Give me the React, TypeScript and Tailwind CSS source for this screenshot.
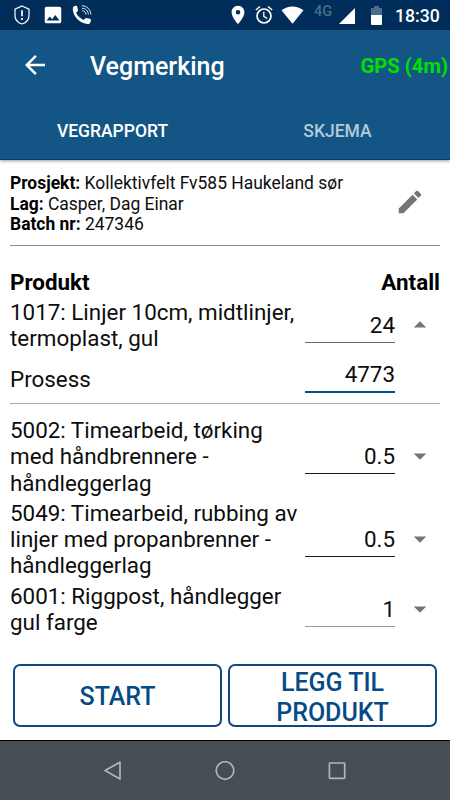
import React from 'react';
import clsx from 'clsx';
import { MdArrowBack, MdArrowDropDown, MdArrowDropUp, MdEdit, MdImage, MdLocationOn } from 'react-icons/md';

type Product = {
  lines: string[];
  amount: string;
  open?: boolean;
  underline: string;
};

const products: Product[] = [
  {
    lines: ['5002: Timearbeid, tørking', 'med håndbrennere -', 'håndleggerlag'],
    amount: '0.5',
    underline: 'bg-[#1c1c1c]',
  },
  {
    lines: ['5049: Timearbeid, rubbing av', 'linjer med propanbrenner -', 'håndleggerlag'],
    amount: '0.5',
    underline: 'bg-[#1c1c1c]',
  },
  {
    lines: ['6001: Riggpost, håndlegger', 'gul farge'],
    amount: '1',
    underline: 'bg-[#999999]',
  },
];

const StatusBar: React.FC = () => (
  <div className="h-[30px] bg-[#002d5a] flex items-center text-white shrink-0">
    {/* Shield */}
    <svg className="ml-[14px] w-4 h-5" viewBox="0 0 16 20" fill="none" stroke="currentColor">
      <path d="M8 1 L15 4.2 V10.5 C15 14.5 12 17.8 8 19 C4 17.8 1 14.5 1 10.5 V4.2 Z" strokeWidth="1.2" />
      <path d="M8 5.2 V11.2 M8 13 V15" strokeWidth="1.7" />
    </svg>
    <MdImage className="ml-[12px] w-[22px] h-[22px]" />
    {/* Call with sound waves */}
    <svg className="ml-[8px] w-[20px] h-[20px]" viewBox="0 0 20 20" fill="none">
      <path
        d="M1.2 2.2 C1.6 1.3 3.4 .7 4.4 .8 C5.2 .9 5.8 4.2 6 5.2 C6.1 6 4.4 7.2 4.1 7.8 C5.5 11 8.2 13.5 11.6 14.9 C12.3 14.6 13.3 12.8 14.1 12.9 L18 13.8 C19.3 14.2 18.9 15.6 18.6 16.7 C18.1 18.4 17.2 19.3 15.6 19.1 C8.2 18.3 1.7 12 .9 5.2 C.7 4 .8 3 1.2 2.2 Z"
        fill="currentColor"
      />
      <path
        d="M9.8 .9 C14.7 .6 18.7 4.4 18.8 9.5 M10 3.3 C13.4 3.2 16.4 6 16.4 9.5 M10.2 5.7 C12.2 5.7 13.9 7.3 14 9.5"
        stroke="currentColor"
        strokeWidth="0.9"
      />
    </svg>
    <div className="flex-1" />
    <MdLocationOn className="w-[22px] h-[22px]" />
    {/* Alarm */}
    <svg className="ml-[6px] w-[18px] h-[20px]" viewBox="0 0 18 20" fill="none" stroke="currentColor">
      <circle cx="9" cy="11" r="7" strokeWidth="1.7" />
      <path d="M.8 5 L5 1.5 M17.2 5 L13 1.5" strokeWidth="1.5" />
      <path d="M8.8 6.8 V11.3 L12.2 13.5" strokeWidth="1.3" />
    </svg>
    <svg className="ml-[8px] w-[23px] h-[18px]" viewBox="0 0 23 18">
      <path d="M.5 4.2 C7 -.9 16 -.9 22.5 4.2 L11.5 17.8 Z" fill="currentColor" />
    </svg>
    <span className="ml-[10px] w-[19px] mb-[7px] text-[14.5px] leading-4 font-medium text-[#4b6c8c]">4G</span>
    <svg className="ml-[6px] mt-[2px] w-4 h-4" viewBox="0 0 16 16">
      <path d="M0 16 L16 0 V16 Z" fill="currentColor" />
    </svg>
    <svg className="ml-[16px] w-[11px] h-[19px]" viewBox="0 0 11 19">
      <path d="M3 0 H8 V2 H11 V9 H0 V2 H3 Z" fill="#4b6c8c" />
      <path d="M0 9 H11 V18 Q11 19 10 19 H1 Q0 19 0 18 Z" fill="currentColor" />
    </svg>
    <span className="ml-[13px] mr-[10px] w-[45px] pt-[2px] text-[17.6px] font-medium">18:30</span>
  </div>
);

const AppHeader: React.FC = () => (
  <header className="h-[130px] bg-[#135685] text-white shrink-0 flex flex-col border-b border-[#003b79] shadow-[0_1px_3px_rgba(0,0,0,0.4)]">
    <div className="h-[71px] flex items-center">
      <MdArrowBack className="ml-[20px] -mt-[2px] w-[30px] h-[30px]" />
      <h1 className="ml-[40px] pt-[2px] text-[25px] leading-8 font-medium">Vegmerking</h1>
      <span className="ml-auto mr-[2px] pt-[2px] text-[20.2px] font-bold text-[#00e000]">GPS (4m)</span>
    </div>
    <nav className="flex-1 flex text-[17.5px] font-medium text-center">
      <span className="w-[225px] pt-[17px]">VEGRAPPORT</span>
      <span className="w-[225px] pt-[17px] text-[#b4cad9]">SKJEMA</span>
    </nav>
  </header>
);

const Amount: React.FC<{ value: string; underline: string }> = ({ value, underline }) => (
  <div className="w-[90px] h-[35px] flex flex-col text-right shrink-0">
    <span className="flex-1 pt-[4px]">{value}</span>
    <div className={clsx('h-px', underline)} />
  </div>
);

const ProductRow: React.FC<Product> = ({ lines, amount, open, underline }) => {
  const Arrow = open ? MdArrowDropUp : MdArrowDropDown;
  return (
    <div className="flex items-center">
      <div className="w-[295px] whitespace-nowrap">
        {lines.map((line) => (
          <div key={line}>{line}</div>
        ))}
      </div>
      <Amount value={amount} underline={underline} />
      <Arrow className="ml-[10px] w-[30px] h-[30px] text-[#757575]" />
    </div>
  );
};

const ActionButton: React.FC<{ children: React.ReactNode }> = ({ children }) => (
  <button className="w-[209px] h-[63px] pt-[2px] rounded-[7px] border-2 border-[#13477f] text-[#064a86] text-[25px] leading-[29.5px] font-medium">
    {children}
  </button>
);

const App: React.FC = () => (
  <div className="w-[450px] h-[800px] overflow-hidden bg-white text-[#0d0d0d] flex flex-col font-[Roboto,sans-serif]">
    <StatusBar />
    <AppHeader />

    <main className="h-[580px] px-[10px] flex flex-col shrink-0">
      {/* Project info */}
      <section className="h-[86px] pt-[13px] flex justify-between border-b border-[#8c8c8c] text-[17.45px] leading-[20.5px] shrink-0">
        <div>
          <p><b className="text-black">Prosjekt:</b> Kollektivfelt Fv585 Haukeland sør</p>
          <p><b className="text-black">Lag:</b> Casper, Dag Einar</p>
          <p><b className="text-black">Batch nr:</b> 247346</p>
        </div>
        <MdEdit className="mt-[14px] mr-[15px] w-[30px] h-[30px] text-[#757575]" />
      </section>

      <div className="h-[53px] pt-[23px] flex justify-between text-[22.4px] leading-[26.3px] font-bold text-black shrink-0">
        <span>Produkt</span>
        <span>Antall</span>
      </div>

      {/* Products */}
      <section className="text-[22.4px] leading-[26.3px]">
        <div className="h-[105px] border-b border-[#aaaaaa]">
          <ProductRow
            lines={['1017: Linjer 10cm, midtlinjer,', 'termoplast, gul']}
            amount="24"
            open
            underline="bg-[#666666]"
          />
          <div className="flex">
            <span className="w-[295px] pt-[14px]">Prosess</span>
            <div className="w-[90px] h-[41px] pt-[9px] text-right border-b-2 border-[#00528c]">4773</div>
          </div>
        </div>
        <div className="pt-[13px] flex flex-col gap-1">
          {products.map((product) => (
            <ProductRow key={product.lines[0]} {...product} />
          ))}
        </div>
      </section>

      <div className="mt-auto mb-[13px] pl-[3px] pr-[3px] flex justify-between">
        <ActionButton>START</ActionButton>
        <ActionButton>LEGG TIL<br />PRODUKT</ActionButton>
      </div>
    </main>

    {/* Navigation bar */}
    <footer className="h-[60px] pl-[103px] pr-[103px] bg-[#464e54] border-t border-black flex items-center justify-between shrink-0 text-[#b2b5b8]">
      <svg className="w-5 h-5" viewBox="0 0 20 20" fill="none" stroke="currentColor" strokeWidth="1.7" strokeLinejoin="round">
        <path d="M2 9.5 L17 1.2 V18 Z" />
      </svg>
      <svg className="w-5 h-5" viewBox="0 0 20 20" fill="none" stroke="currentColor" strokeWidth="1.7">
        <circle cx="10" cy="9.5" r="8.8" />
      </svg>
      <svg className="w-5 h-5" viewBox="0 0 20 20" fill="none" stroke="currentColor" strokeWidth="1.7">
        <rect x="2.4" y="2" width="15.3" height="15.3" rx="0.5" />
      </svg>
    </footer>
  </div>
);

export default App;
